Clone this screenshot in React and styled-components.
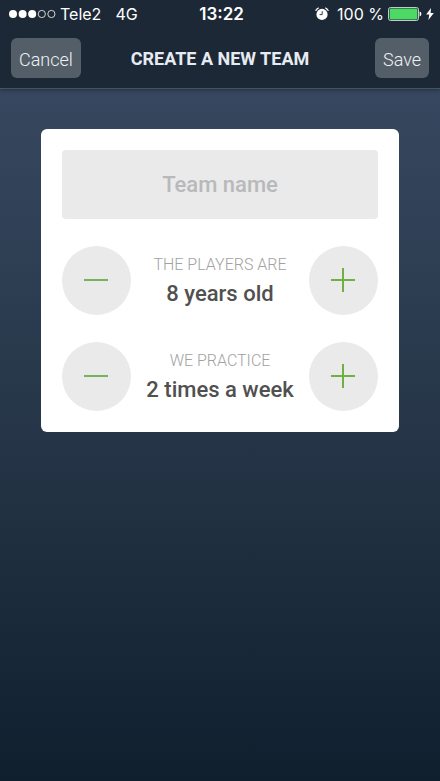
import React, { useState } from "react";
import styled, { createGlobalStyle } from "styled-components";

const StatusBar = () => (
  <StatusContainer>
    <StatusGroup>
      <svg width="47" height="10" viewBox="0 0 47 10" aria-hidden="true">
        <g fill="#fff">
          <circle cx="4" cy="5" r="4" />
          <circle cx="13.6" cy="5" r="4" />
          <circle cx="23.2" cy="5" r="4" />
        </g>
        <g fill="none" stroke="#fff" strokeWidth="0.8">
          <circle cx="32.8" cy="5" r="3.6" />
          <circle cx="42.4" cy="5" r="3.6" />
        </g>
      </svg>
      <Carrier>Tele2</Carrier>
      <span>4G</span>
    </StatusGroup>
    <Clock>13:22</Clock>
    <StatusGroup $end>
      <AlarmIcon width="14" height="14" viewBox="0 0 14 14" aria-hidden="true">
        <circle cx="7" cy="7.4" r="5.6" fill="#fff" />
        <path
          d="M0.9 3.4 A7.4 7.4 0 0 1 3.4 1.1 M10.6 1.1 A7.4 7.4 0 0 1 13.1 3.4"
          fill="none"
          stroke="#fff"
          strokeWidth="1.2"
          strokeLinecap="round"
        />
        <path
          d="M7.2 4.2 V7.6 H4.6"
          fill="none"
          stroke="#1c2733"
          strokeWidth="0.9"
        />
      </AlarmIcon>
      <span>100 %</span>
      <BatteryIcon width="34" height="14" viewBox="0 0 34 14" aria-hidden="true">
        <rect
          x="0.5"
          y="0.5"
          width="30"
          height="13"
          rx="2"
          fill="none"
          stroke="#d5dde2"
          strokeWidth="0.9"
        />
        <rect x="1.6" y="1.6" width="27.8" height="10.8" rx="1" fill="#4cd964" />
        <path d="M31.6 4.6 Q33.4 5 33.4 7 Q33.4 9 31.6 9.4 Z" fill="#fff" />
      </BatteryIcon>
      <BoltIcon width="8" height="12" viewBox="0 0 8 12" aria-hidden="true">
        <path d="M5 0 L0.2 6.6 H3.3 L2.4 12 L7.8 4.9 H4.6 Z" fill="#fff" />
      </BoltIcon>
    </StatusGroup>
  </StatusContainer>
);

const Stepper = ({ label, value, onDecrease, onIncrease }) => (
  <StepperRow role="group" aria-label={label}>
    <RoundButton type="button" aria-label="Decrease" onClick={onDecrease}>
      <svg width="24" height="24" viewBox="0 0 24 24">
        <path d="M0 12 H24" stroke="#78b159" strokeWidth="2" />
      </svg>
    </RoundButton>
    <StepperText>
      <StepperLabel>{label}</StepperLabel>
      <StepperValue>{value}</StepperValue>
    </StepperText>
    <RoundButton type="button" aria-label="Increase" onClick={onIncrease}>
      <svg width="24" height="24" viewBox="0 0 24 24">
        <path d="M0 12 H24 M12 0 V24" stroke="#6fb043" strokeWidth="2" />
      </svg>
    </RoundButton>
  </StepperRow>
);

const App = () => {
  const [name, setName] = useState("");
  const [age, setAge] = useState(8);
  const [practices, setPractices] = useState(2);

  return (
    <Page>
      <GlobalStyle />
      <Header>
        <StatusBar />
        <NavBar>
          <NavSide>
            <NavButton type="button">Cancel</NavButton>
          </NavSide>
          <Title>CREATE A NEW TEAM</Title>
          <NavSide $end>
            <NavButton type="button">Save</NavButton>
          </NavSide>
        </NavBar>
      </Header>
      <Content>
        <Card>
          <NameInput
            type="text"
            aria-label="Team name"
            placeholder="Team name"
            value={name}
            onChange={(e) => setName(e.target.value)}
          />
          <Stepper
            label="THE PLAYERS ARE"
            value={`${age} years old`}
            onDecrease={() => setAge(Math.max(1, age - 1))}
            onIncrease={() => setAge(age + 1)}
          />
          <Stepper
            label="WE PRACTICE"
            value={`${practices} times a week`}
            onDecrease={() => setPractices(Math.max(1, practices - 1))}
            onIncrease={() => setPractices(practices + 1)}
          />
        </Card>
      </Content>
    </Page>
  );
};

const GlobalStyle = createGlobalStyle`
  * {
    box-sizing: border-box;
  }
  body {
    margin: 0;
    font-family: Roboto, "Liberation Sans", sans-serif;
  }
  button,
  input {
    font-family: inherit;
  }
`;

const Page = styled.div`
  display: flex;
  flex-direction: column;
  min-height: 100vh;
  background: linear-gradient(#37475f 88px, #263648 55%, #101f2e);
`;

const Header = styled.header`
  background-color: #1c2835;
  border-bottom: 1px solid #46525f;
  box-shadow: 0 1px 4px rgba(0, 0, 0, 0.35);
`;

const StatusContainer = styled.div`
  display: flex;
  align-items: center;
  height: 28px;
  padding: 0 6px 0 9px;
  color: #fff;
  font-family: Inter, Roboto, sans-serif;
  font-size: 16px;
  line-height: 20px;
`;

const StatusGroup = styled.div`
  display: flex;
  flex: 1 1 0;
  align-items: center;
  justify-content: ${({ $end }) => ($end ? "flex-end" : "flex-start")};
  white-space: nowrap;
`;

const Carrier = styled.span`
  margin: 0 14px 0 4px;
`;

const Clock = styled.span`
  font-size: 17px;
  font-weight: 600;
`;

const AlarmIcon = styled.svg`
  margin-right: 8px;
`;

const BatteryIcon = styled.svg`
  margin: 0 4px;
`;

const BoltIcon = styled.svg`
  flex: none;
`;

const NavBar = styled.div`
  display: flex;
  align-items: center;
  padding: 10px 11px;
`;

const NavSide = styled.div`
  display: flex;
  flex: 1 1 0;
  justify-content: ${({ $end }) => ($end ? "flex-end" : "flex-start")};
`;

const NavButton = styled.button`
  height: 40px;
  padding: 2px 8px 0;
  border: 0;
  border-radius: 6px;
  background-color: #545e68;
  color: #eef1f4;
  font-size: 18px;
  font-weight: 300;
  cursor: pointer;
`;

const Title = styled.h1`
  margin: 0;
  padding-top: 2px;
  color: #e6ebf2;
  font-size: 18px;
  font-weight: 700;
  line-height: 24px;
  white-space: nowrap;
`;

const Content = styled.main`
  padding: 40px 41px;
`;

const Card = styled.form`
  display: flex;
  flex-direction: column;
  gap: 27px;
  padding: 21px;
  border-radius: 6px;
  background-color: #fff;
`;

const NameInput = styled.input`
  width: 100%;
  height: 69px;
  padding: 0 16px;
  border: 0;
  border-radius: 4px;
  background-color: #eaeaea;
  color: #555;
  font-size: 22px;
  font-weight: 500;
  text-align: center;

  &::placeholder {
    color: #b8b9bb;
    opacity: 1;
  }
`;

const StepperRow = styled.div`
  display: flex;
  align-items: center;
  justify-content: space-between;
`;

const RoundButton = styled.button`
  display: flex;
  flex: none;
  align-items: center;
  justify-content: center;
  width: 69px;
  height: 69px;
  padding: 0 1px 1px 0;
  border: 0;
  border-radius: 50%;
  background-color: #eaeaea;
  cursor: pointer;
`;

const StepperText = styled.div`
  display: flex;
  flex-direction: column;
  align-items: center;
  padding-bottom: 1px;
  white-space: nowrap;
`;

const StepperLabel = styled.span`
  color: #a2a2a2;
  font-size: 16px;
  font-weight: 300;
  line-height: 28px;
`;

const StepperValue = styled.output`
  color: #505050;
  font-size: 22px;
  font-weight: 500;
  line-height: 30px;
`;

export default App;
